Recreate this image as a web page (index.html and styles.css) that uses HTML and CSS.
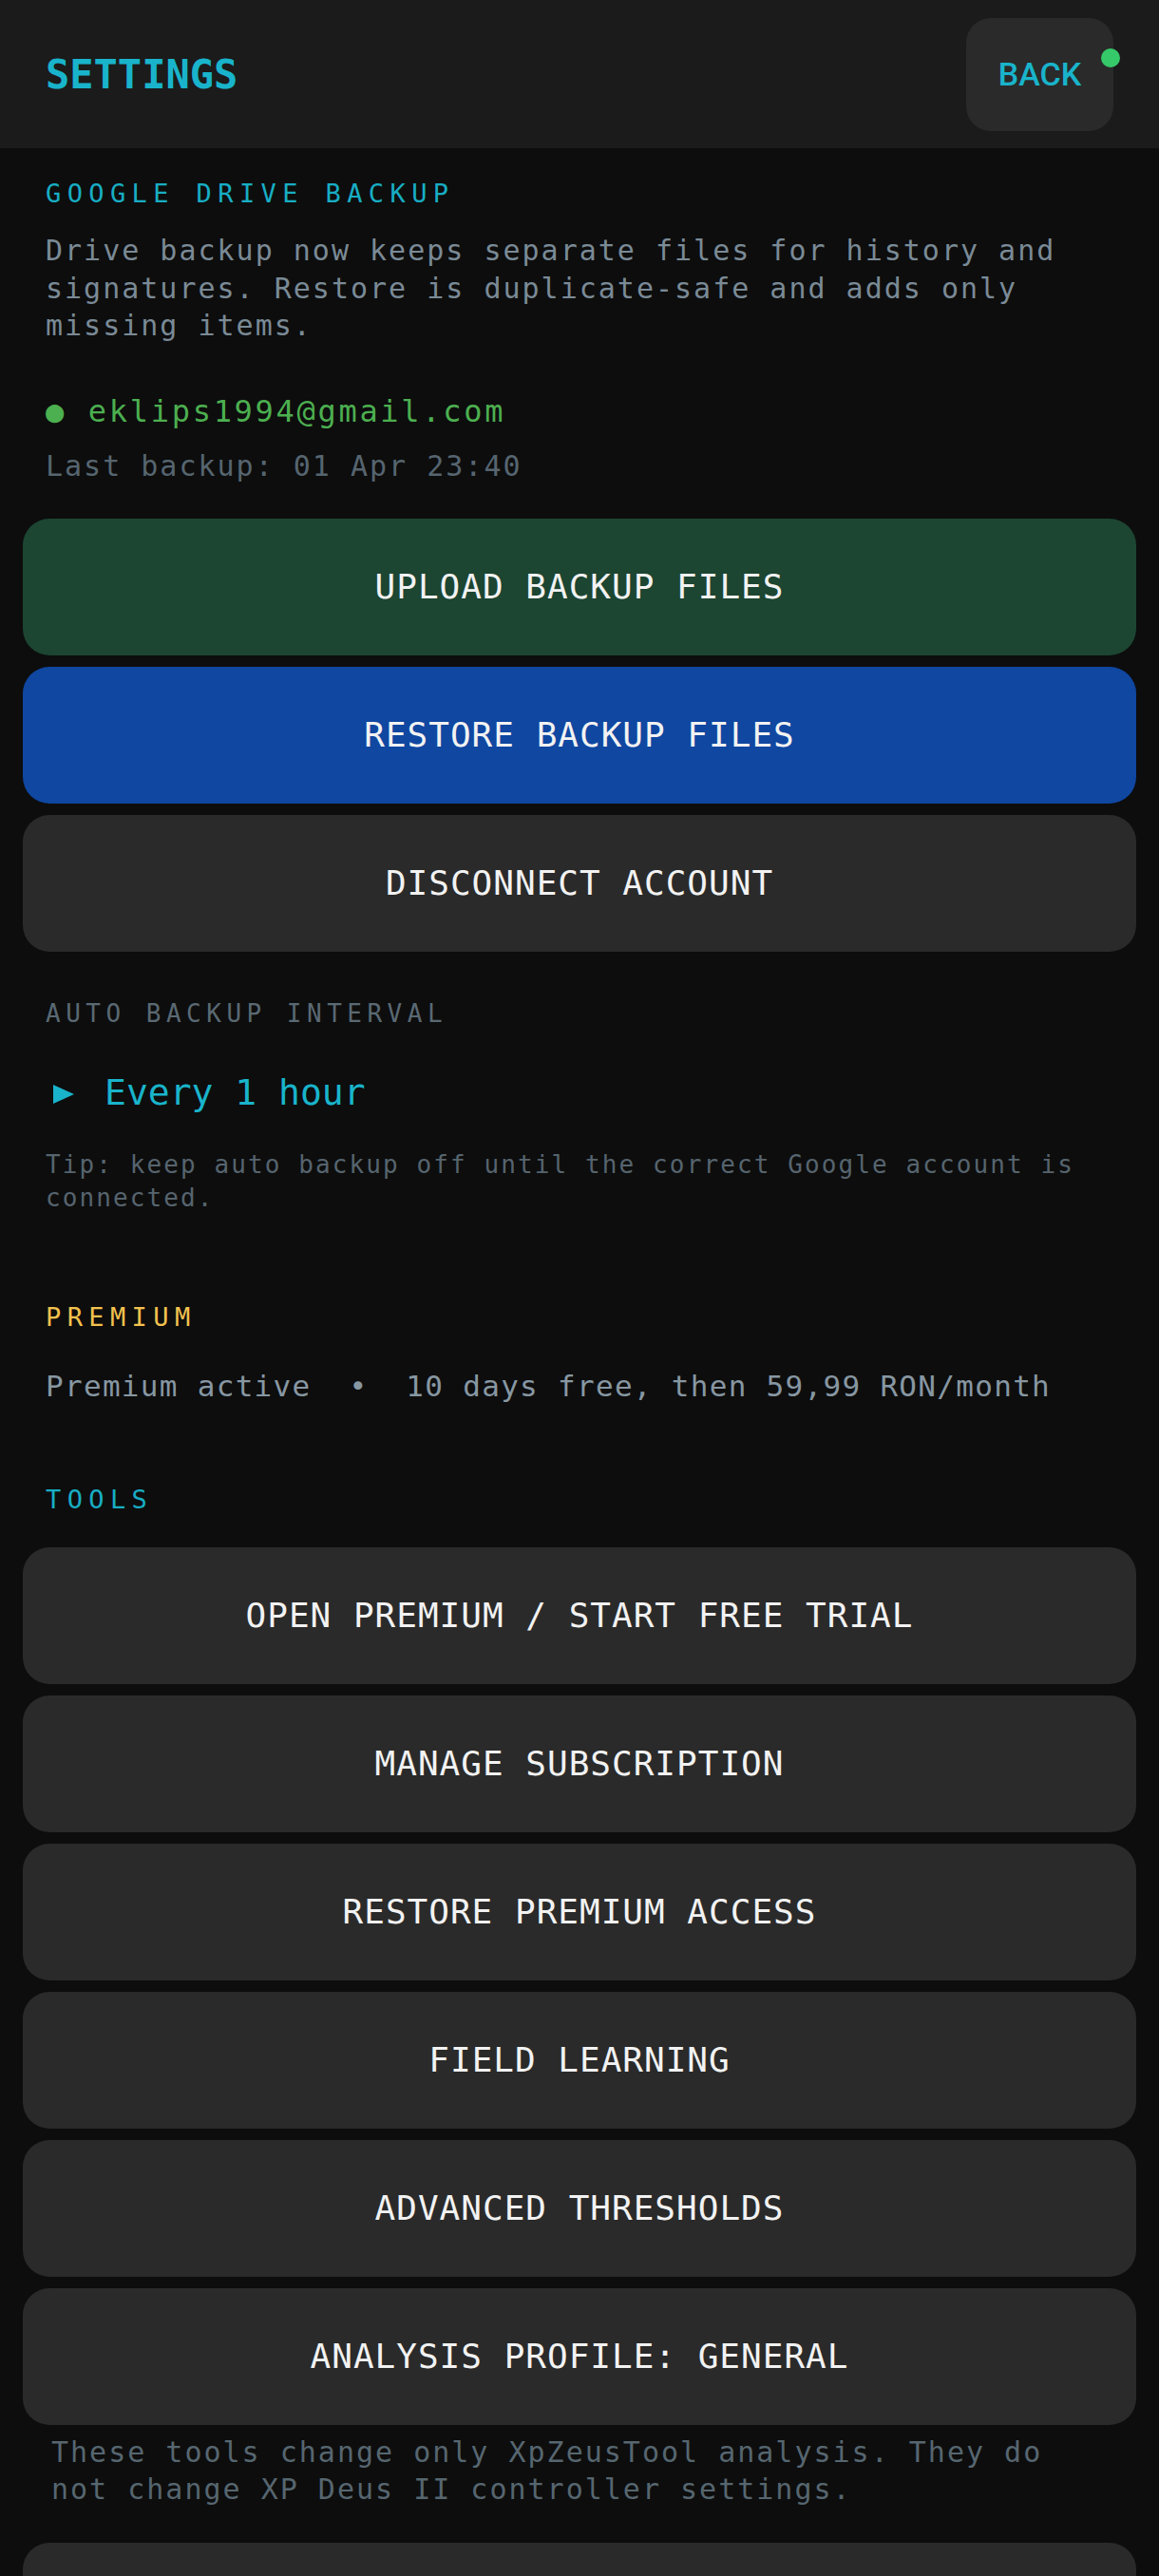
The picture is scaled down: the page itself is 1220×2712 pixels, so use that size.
FILE: index.html
```html
<!DOCTYPE html>
<html lang="en">
<head>
    <meta charset="UTF-8" />
    <meta name="viewport" content="width=device-width, initial-scale=1.0"/>
    <title>Settings</title>
    <link rel="stylesheet" href="styles.css">
</head>
<body>
<header class="topbar">
    <h1 class="page-title">SETTINGS</h1>
    <button class="back-btn">BACK<span class="status-dot"></span></button>
</header>

<main class="content">
    <section class="drive">
        <h2 class="section-title title-drive">GOOGLE DRIVE BACKUP</h2>
        <p class="desc">Drive backup now keeps separate files for history and signatures. Restore is duplicate-safe and adds only missing items.</p>
        <div class="account"><span class="dot">●</span> eklips1994@gmail.com</div>
        <div class="last-backup">Last backup: 01 Apr 23:40</div>

        <div class="btn-list">
            <button class="wide-btn btn-green">UPLOAD BACKUP FILES</button>
            <button class="wide-btn btn-blue">RESTORE BACKUP FILES</button>
            <button class="wide-btn">DISCONNECT ACCOUNT</button>
        </div>
    </section>

    <section class="interval">
        <h2 class="sub-title">AUTO BACKUP INTERVAL</h2>
        <div class="interval-value"><span class="arrow"></span>Every 1 hour</div>
        <p class="tip">Tip: keep auto backup off until the correct Google account is connected.</p>
    </section>

    <section class="premium">
        <h2 class="section-title title-premium">PREMIUM</h2>
        <div class="premium-status">Premium active &nbsp;•&nbsp; 10 days free, then 59,99 RON/month</div>
    </section>

    <section class="tools">
        <h2 class="section-title title-tools">TOOLS</h2>
        <div class="btn-list">
            <button class="wide-btn">OPEN PREMIUM / START FREE TRIAL</button>
            <button class="wide-btn">MANAGE SUBSCRIPTION</button>
            <button class="wide-btn">RESTORE PREMIUM ACCESS</button>
            <button class="wide-btn">FIELD LEARNING</button>
            <button class="wide-btn">ADVANCED THRESHOLDS</button>
            <button class="wide-btn">ANALYSIS PROFILE: GENERAL</button>
        </div>
        <p class="footnote">These tools change only XpZeusTool analysis. They do not change XP Deus II controller settings.</p>
        <div class="btn-list">
            <button class="wide-btn" aria-label="More"></button>
        </div>
    </section>
</main>
</body>
</html>
```

FILE: styles.css
```css
body {
    margin: 0;
    background: #0d0d0d;
    font-family: "DejaVu Sans Mono", "Liberation Mono", monospace;
    color: #7a8a96;
}

.topbar {
    height: 156px;
    padding: 0 48px;
    background: #1b1b1b;
    display: flex;
    align-items: center;
    justify-content: space-between;
    box-sizing: border-box;
}

.page-title {
    margin: 0;
    font-size: 42px;
    font-weight: bold;
    color: #19b4cb;
}

.back-btn {
    position: relative;
    width: 155px;
    height: 119px;
    border: none;
    border-radius: 26px;
    background: #2a2a2a;
    color: #19b4cb;
    font-family: Roboto, "Noto Sans", sans-serif;
    font-weight: 500;
    font-size: 34px;
    padding: 0;
}

.status-dot {
    position: absolute;
    top: 32px;
    right: -7px;
    width: 20px;
    height: 20px;
    border-radius: 50%;
    background: #35c96a;
}

.content {
    padding: 30px 24px 0;
}

.section-title {
    margin: 0 24px;
    font-size: 27px;
    font-weight: normal;
    letter-spacing: 6.4px;
    line-height: 36px;
}

.title-drive { color: #18adc4; }
.title-premium { color: #f2c14e; }
.title-tools { color: #18adc4; }

.desc {
    margin: 22px 24px 0;
    font-size: 30px;
    letter-spacing: 2px;
    line-height: 39.5px;
    color: #7a8a96;
}

.account {
    margin: 50px 24px 0;
    font-size: 32px;
    letter-spacing: 2.7px;
    line-height: 40px;
    color: #4caf50;
}

.account .dot {
    display: inline-block;
    width: 22.9px;
    font-size: 32px;
    letter-spacing: 0;
}

.last-backup {
    margin: 18px 24px 0;
    font-size: 30px;
    letter-spacing: 2px;
    line-height: 40px;
    color: #566570;
}

.btn-list {
    display: flex;
    flex-direction: column;
    gap: 12px;
}

.drive .btn-list {
    margin-top: 35px;
}

.wide-btn {
    height: 144px;
    border: none;
    border-radius: 28px;
    background: #2a2a2a;
    color: #f2f2f2;
    font-family: "DejaVu Sans Mono", "Liberation Mono", monospace;
    font-size: 36px;
    letter-spacing: 1px;
}

.btn-green { background: #1c4532; }
.btn-blue { background: #0f47a1; }

.sub-title {
    margin: 47px 24px 0;
    font-size: 26px;
    font-weight: normal;
    letter-spacing: 5.5px;
    line-height: 36px;
    color: #5a6973;
}

.interval-value {
    margin: 40px 24px 0;
    display: flex;
    align-items: center;
    font-size: 38px;
    line-height: 50px;
    color: #19b4cb;
}

.arrow {
    width: 0;
    height: 0;
    margin: 4px 32px 0 8px;
    border-left: 22px solid #19b4cb;
    border-top: 10px solid transparent;
    border-bottom: 10px solid transparent;
}

.tip {
    margin: 34px 24px 0;
    font-size: 26px;
    letter-spacing: 2.1px;
    line-height: 35px;
    color: #56646e;
}

.premium .section-title {
    margin-top: 90px;
}

.premium-status {
    margin: 34px 24px 0;
    font-size: 31px;
    letter-spacing: 1.3px;
    line-height: 40px;
    color: #8797a2;
    white-space: nowrap;
}

.tools .section-title {
    margin-top: 82px;
}

.tools .btn-list {
    margin-top: 32px;
}

.footnote {
    margin: 9px 30px 37px;
    font-size: 30px;
    letter-spacing: 2px;
    line-height: 39px;
    color: #566670;
}

.tools .footnote + .btn-list {
    margin-top: 0;
}
```
